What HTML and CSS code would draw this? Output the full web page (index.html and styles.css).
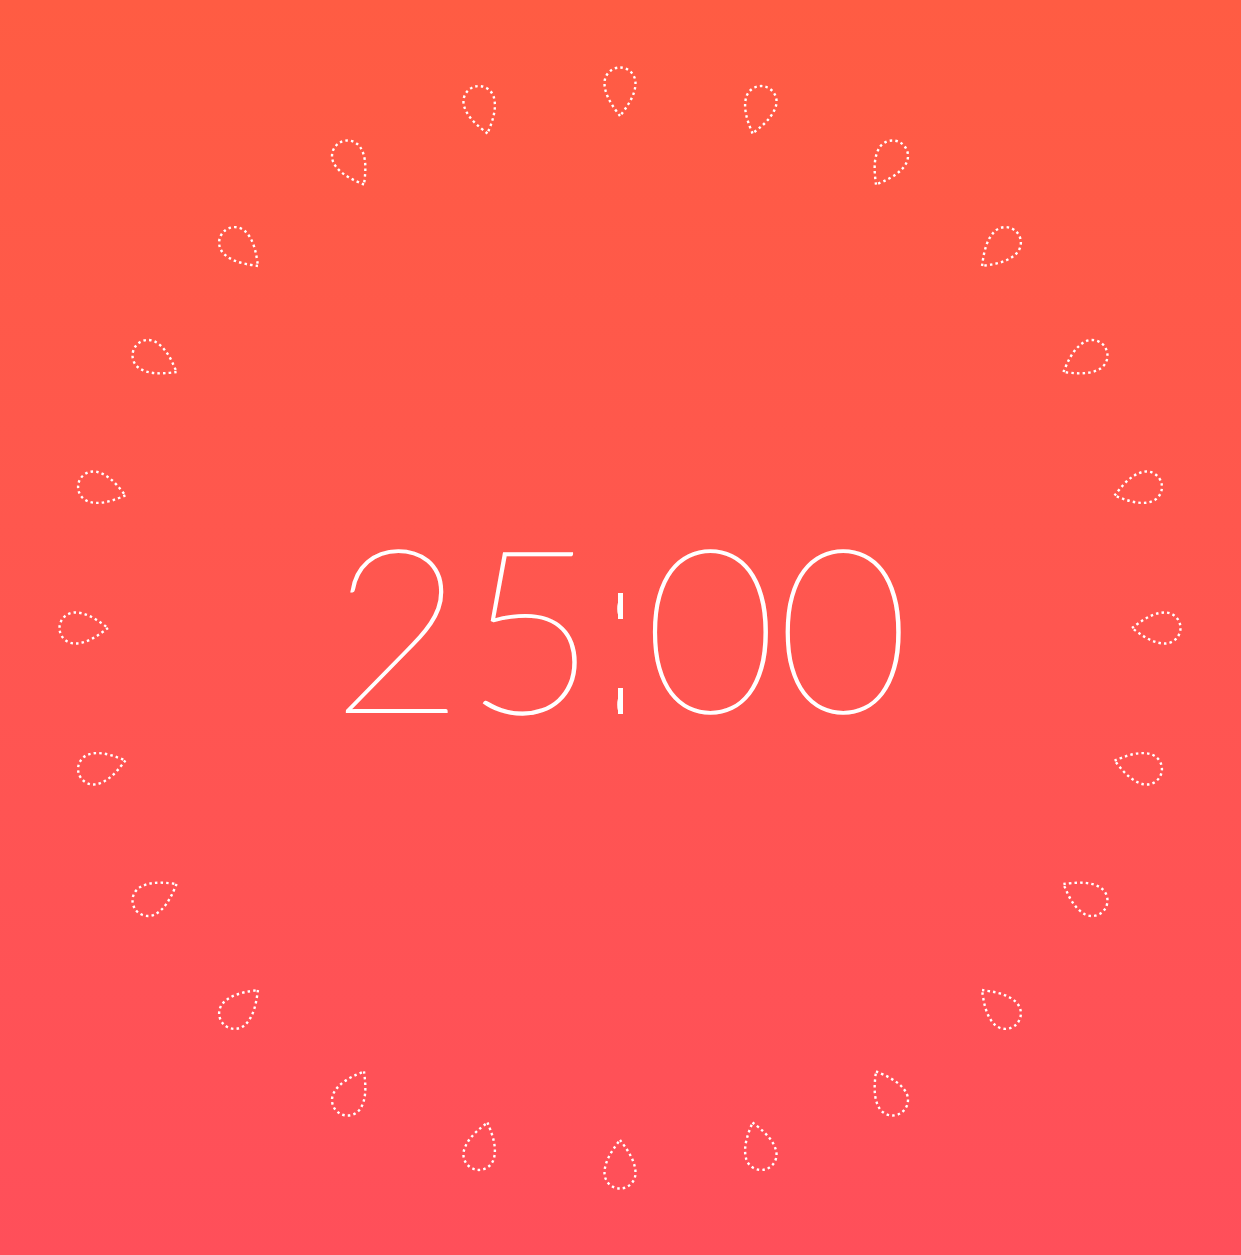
FILE: index.html
```html
<!DOCTYPE html>
<html lang="en">
<head>
<meta charset="utf-8">
<title>Pomodoro Timer</title>
<link rel="stylesheet" href="styles.css">
</head>
<body>
<main class="stage">
  <svg class="ring" viewBox="0 0 1241 1255" aria-hidden="true">
    <defs>
      <path id="drop" d="M0 33 C -6 25 -15.5 13 -15.5 0 A 15.5 15.5 0 0 1 15.5 0 C 15.5 13 6 25 0 33 Z"/>
    </defs>
    <g class="drops">
      <use href="#drop" transform="rotate(0 620 628) translate(620 83)"/>
      <use href="#drop" transform="rotate(15 620 628) translate(620 83)"/>
      <use href="#drop" transform="rotate(30 620 628) translate(620 83)"/>
      <use href="#drop" transform="rotate(45 620 628) translate(620 83)"/>
      <use href="#drop" transform="rotate(60 620 628) translate(620 83)"/>
      <use href="#drop" transform="rotate(75 620 628) translate(620 83)"/>
      <use href="#drop" transform="rotate(90 620 628) translate(620 83)"/>
      <use href="#drop" transform="rotate(105 620 628) translate(620 83)"/>
      <use href="#drop" transform="rotate(120 620 628) translate(620 83)"/>
      <use href="#drop" transform="rotate(135 620 628) translate(620 83)"/>
      <use href="#drop" transform="rotate(150 620 628) translate(620 83)"/>
      <use href="#drop" transform="rotate(165 620 628) translate(620 83)"/>
      <use href="#drop" transform="rotate(180 620 628) translate(620 83)"/>
      <use href="#drop" transform="rotate(195 620 628) translate(620 83)"/>
      <use href="#drop" transform="rotate(210 620 628) translate(620 83)"/>
      <use href="#drop" transform="rotate(225 620 628) translate(620 83)"/>
      <use href="#drop" transform="rotate(240 620 628) translate(620 83)"/>
      <use href="#drop" transform="rotate(255 620 628) translate(620 83)"/>
      <use href="#drop" transform="rotate(270 620 628) translate(620 83)"/>
      <use href="#drop" transform="rotate(285 620 628) translate(620 83)"/>
      <use href="#drop" transform="rotate(300 620 628) translate(620 83)"/>
      <use href="#drop" transform="rotate(315 620 628) translate(620 83)"/>
      <use href="#drop" transform="rotate(330 620 628) translate(620 83)"/>
      <use href="#drop" transform="rotate(345 620 628) translate(620 83)"/>
    </g>
  </svg>
  <div class="time"><span class="digits">25</span><span class="colon"><span class="colon-glyph">:</span></span><span class="digits">00</span></div>
</main>
</body>
</html>
```
FILE: styles.css
```css
html, body {
  margin: 0;
  padding: 0;
}

body {
  font-family: Lato, Roboto, "Liberation Sans", sans-serif;
}

.stage {
  position: relative;
  width: 1241px;
  height: 1255px;
  overflow: hidden;
  display: grid;
  place-items: center;
  background: linear-gradient(180deg, #ff5c43 0%, #ff5650 50%, #ff4f5a 100%);
}

.ring {
  position: absolute;
  inset: 0;
  width: 100%;
  height: 100%;
}

.drops use {
  fill: none;
  stroke: #ffffff;
  stroke-width: 2.4;
  stroke-dasharray: 2.5 3.1;
  stroke-linecap: butt;
}

.time {
  position: relative;
  display: flex;
  align-items: baseline;
  color: #ffffff;
  font-size: 229px;
  font-weight: 200;
  line-height: 1;
  padding-bottom: 6px;
}

.digits {
  -webkit-text-stroke: 1.4px #ffffff;
}

.colon {
  position: relative;
  display: inline-block;
  width: 47px;
  height: 229px;
  text-align: center;
}

.colon-glyph {
  display: inline-block;
  transform: translate(-4px, -3px) scaleX(0.3);
}

.colon::before,
.colon::after {
  content: "";
  position: absolute;
  left: 50%;
  width: 5px;
  margin-left: -2.5px;
  height: 26px;
  background: #ffffff;
}

.colon::before {
  top: 83px;
}

.colon::after {
  top: 178px;
}
```
